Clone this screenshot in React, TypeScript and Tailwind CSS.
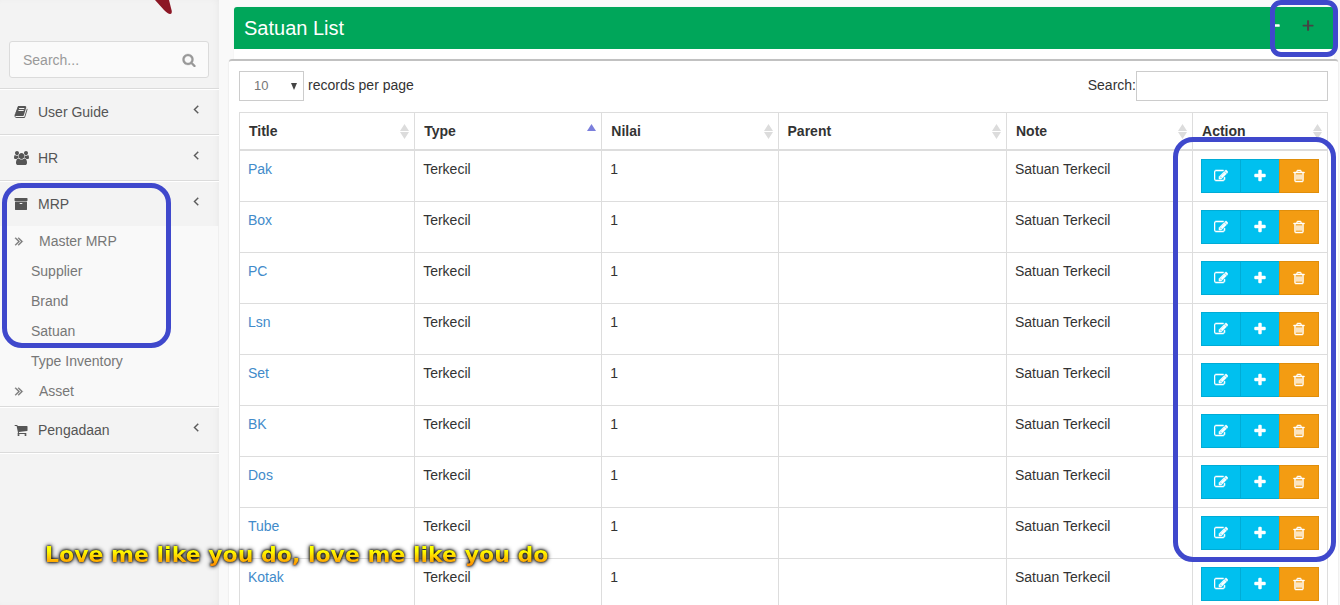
import React from "react";

const PATHS = {
  plus: "M1600 736v192q0 40-28 68t-68 28h-416v416q0 40-28 68t-68 28h-192q-40 0-68-28t-28-68v-416h-416q-40 0-68-28t-28-68v-192q0-40 28-68t68-28h416v-416q0-40 28-68t68-28h192q40 0 68 28t28 68v416h416q40 0 68 28t28 68z",
  thinPlus: "M1600 760v144q0 40-68 40h-496v496q0 60-50 60h-164q-50 0-50-60v-496h-496q-68 0-68-40v-144q0-40 68-40h496v-496q0-60 50-60h164q50 0 50 60v496h496q68 0 68 40z",
  minus: "M1600 736v192q0 40-28 68t-68 28h-1216q-40 0-68-28t-28-68v-192q0-40 28-68t68-28h1216q40 0 68 28t28 68z",
  search:
    "M1216 832q0-185-131.500-316.500t-316.500-131.500-316.500 131.500-131.500 316.500 131.500 316.500 316.500 131.500 316.500-131.500 131.500-316.500zm512 832q0 52-38 90t-90 38q-54 0-90-38l-343-342q-179 124-399 124-143 0-273.500-55.500t-225-150-150-225-55.500-273.500 55.500-273.500 150-225 225-150 273.500-55.500 273.500 55.500 225 150 150 225 55.500 273.500q0 220-124 399l343 343q37 37 37 90z",
  trash:
    "M704 736v576q0 14-9 23t-23 9h-64q-14 0-23-9t-9-23v-576q0-14 9-23t23-9h64q14 0 23 9t9 23zm256 0v576q0 14-9 23t-23 9h-64q-14 0-23-9t-9-23v-576q0-14 9-23t23-9h64q14 0 23 9t9 23zm256 0v576q0 14-9 23t-23 9h-64q-14 0-23-9t-9-23v-576q0-14 9-23t23-9h64q14 0 23 9t9 23zm128 724v-948h-896v948q0 22 7 40.500t14.500 27 10.500 8.500h832q3 0 10.500-8.500t14.500-27 7-40.500zm-672-1076h448l-48-117q-7-9-17-11h-317q-10 2-17 11zm928 32v64q0 14-9 23t-23 9h-96v948q0 83-47 143.500t-113 60.500h-832q-66 0-113-58.500t-47-141.500v-952h-96q-14 0-23-9t-9-23v-64q0-14 9-23t23-9h309l70-167q15-37 54-63t79-26h320q40 0 79 26t54 63l70 167h309q14 0 23 9t9 23z",
  edit: "M888 1184l116-116-152-152-116 116v56h96v96h56zm440-720q-16-16-33 1l-350 350q-17 17-1 33t33-1l350-350q17-17 1-33zm80 594v190q0 119-84.500 203.500t-203.500 84.500h-832q-119 0-203.500-84.500t-84.500-203.500v-832q0-119 84.500-203.500t203.500-84.500h832q63 0 117 25 15 7 18 23 3 17-9 29l-49 49q-14 14-32 8-23-6-45-6h-832q-66 0-113 47t-47 113v832q0 66 47 113t113 47h832q66 0 113-47t47-113v-126q0-13 9-22l64-64q15-15 35-7t20 29zm-96-738l288 288-672 672h-288v-288zm444 132l-92 92-288-288 92-92q28-28 68-28t68 28l152 152q28 28 28 68t-28 68z",
  archive:
    "M1088 832q0-26-19-45t-45-19h-256q-26 0-45 19t-19 45 19 45 45 19h256q26 0 45-19t19-45zm576-192v960q0 26-19 45t-45 19h-1408q-26 0-45-19t-19-45v-960q0-26 19-45t45-19h1408q26 0 45 19t19 45zm64-448v256q0 26-19 45t-45 19h-1536q-26 0-45-19t-19-45v-256q0-26 19-45t45-19h1536q26 0 45 19t19 45z",
  cart: "M704 1536q0 52-38 90t-90 38-90-38-38-90 38-90 90-38 90 38 38 90zm896 0q0 52-38 90t-90 38-90-38-38-90 38-90 90-38 90 38 38 90zm128-1088v512q0 24-16.500 42.500t-40.500 21.500l-1044 122q13 60 13 70 0 16-24 64h920q26 0 45 19t19 45-19 45-45 19h-1024q-26 0-45-19t-19-45q0-11 8-31.500t16-36 21.500-40 15.500-29.500l-177-823h-204q-26 0-45-19t-19-45 19-45 45-19h256q16 0 28.500 6.500t19.500 15.500 13 24.500 8 26 5.500 29.500 4.500 26h1201q26 0 45 19t19 45z",
  book: "M1703 478q40 57 18 129l-275 906q-19 64-76.500 107.500t-122.500 43.500h-923q-77 0-148.500-53.500t-99.500-131.500q-24-67-2-127 0-4 3-27t4-37q1-8-3-21.500t-3-19.500q2-11 8-21t16.500-23.500 16.500-23.500q23-38 45-91.500t30-91.500q3-10 .5-30t-.5-28q3-11 17-28t17-23q21-36 42-92t25-90q1-9-2.500-32t.5-28q4-13 22-30.500t22-22.500q19-26 42.500-84.500t27.500-96.500q1-8-3-25.500t-2-26.500q2-8 9-18t18-23 17-21q8-12 16.500-30.500t15-35 16-36 19.500-32 26.500-23.500 36-11.500 47.500 5.500l-1 3q38-9 51-9h761q74 0 114 56t18 130l-274 906q-36 119-71.500 153.500t-128.500 34.500h-869q-27 0-38 15-11 16-1 43 24 70 144 70h923q29 0 56-15.500t35-41.500l300-987q7-22 5-57 38 15 59 43zm-1064 2q-4 13 2 22.500t20 9.500h608q13 0 25.500-9.500t16.500-22.500l21-64q4-13-2-22.500t-20-9.500h-608q-13 0-25.500 9.500t-16.500 22.500zm-83 256q-4 13 2 22.500t20 9.500h608q13 0 25.500-9.500t16.500-22.500l21-64q4-13-2-22.500t-20-9.500h-608q-13 0-25.500 9.500t-16.500 22.500z",
  users:
    "M593 896q-162 5-265 128h-134q-82 0-138-40.500t-56-118.500q0-353 124-353 6 0 43.500 21t97.500 42.500 119 21.500q67 0 133-23-5 37-5 66 0 139 81 256zm1071 637q0 120-73 189.500t-194 69.500h-874q-121 0-194-69.500t-73-189.500q0-53 3.500-103.500t14-109 26.500-108.500 43-97.500 62-81 85.500-53.500 111.500-20q10 0 43 21.500t73 48 107 48 135 21.500 135-21.500 107-48 73-48 43-21.500q61 0 111.500 20t85.500 53.500 62 81 43 97.500 26.500 108.500 14 109 3.500 103.500zm-1024-1277q0 106-75 181t-181 75-181-75-75-181 75-181 181-75 181 75 75 181zm704 384q0 159-112.500 271.500t-271.500 112.500-271.500-112.500-112.500-271.500 112.500-271.500 271.500-112.500 271.500 112.500 112.500 271.500zm576 225q0 78-56 118.500t-138 40.500h-134q-103-123-265-128 81-117 81-256 0-29-5-66 66 23 133 23 59 0 119-21.500t97.500-42.500 43.500-21q124 0 124 353zm-128-609q0 106-75 181t-181 75-181-75-75-181 75-181 181-75 181 75 75 181z",
  angleLeft:
    "M1203 544q0 13-10 23l-393 393 393 393q10 10 10 23t-10 23l-50 50q-10 10-23 10t-23-10l-466-466q-10-10-10-23t10-23l466-466q10-10 23-10t23 10l50 50q10 10 10 23z",
  doubleRight:
    "M979 960q0 13-10 23l-466 466q-10 10-23 10t-23-10l-50-50q-10-10-10-23t10-23l393-393-393-393q-10-10-10-23t10-23l50-50q10-10 23-10t23 10l466 466q10 10 10 23zm384 0q0 13-10 23l-466 466q-10 10-23 10t-23-10l-50-50q-10-10-10-23t10-23l393-393-393-393q-10-10-10-23t10-23l50-50q10-10 23-10t23 10l466 466q10 10 10 23z",
};

type IconName = keyof typeof PATHS;

function Icon({ name, className }: { name: IconName; className: string }) {
  return (
    <svg viewBox={name === "users" ? "0 0 1920 1792" : "0 0 1792 1792"} className={className} fill="currentColor" stroke="currentColor" aria-hidden="true">
      <path d={PATHS[name]} />
    </svg>
  );
}

function MenuLink({ icon, label }: { icon: IconName; label: string }) {
  return (
    <a href="#" className="flex h-[46px] items-center border-t border-[#dbdbdb] pl-3.5 pr-4 text-[#555] shadow-[inset_0_1px_0_#fff]">
      <span className="flex w-6 items-center">
        <Icon name={icon} className={icon === "users" ? "h-3.5 w-[15px]" : "size-3.5"} />
      </span>
      <span className="flex-1">{label}</span>
      <Icon name="angleLeft" className="mb-1.5 size-3.5 stroke-[50]" />
    </a>
  );
}

function SubLink({ label, parent }: { label: string; parent?: boolean }) {
  return (
    <li>
      <a href="#" className={parent ? "flex h-[30px] items-center pl-3 text-[#777]" : "flex h-[30px] items-center pl-[31px] text-[#777]"}>
        {parent && <Icon name="doubleRight" className="mr-[13px] size-3.5 stroke-[50]" />}
        {label}
      </a>
    </li>
  );
}

function Sidebar() {
  return (
    <aside className="w-[219px] shrink-0 bg-[#f3f3f3] shadow-[inset_-3px_0_8px_-4px_rgba(0,0,0,0.07)]">
      <div className="flex h-[41px] items-start justify-center pl-[109px]">
        <svg viewBox="0 0 24 15" className="h-[15px] w-6" aria-hidden="true">
          <path d="M3 0H17L19 8Q21 14 18 14Q16 14 12 10Z" fill="#8c1725" />
        </svg>
      </div>
      <form className="mb-2.5 ml-[9px] mr-2.5 flex h-[37px] rounded-[3px] border border-[#dbdbdb] bg-[#fafafa]">
        <input type="text" aria-label="Search menu" placeholder="Search..." className="min-w-0 flex-1 pl-[13px] text-[#666] outline-none placeholder:text-[#999]" />
        <button type="button" aria-label="Search" className="px-3 text-[#999]">
          <Icon name="search" className="size-3.5 stroke-[40]" />
        </button>
      </form>
      <nav aria-label="Main menu">
        <ul>
          <li><MenuLink icon="book" label="User Guide" /></li>
          <li><MenuLink icon="users" label="HR" /></li>
          <li>
            <MenuLink icon="archive" label="MRP" />
            <ul className="border-r border-[#efefef] bg-[#f9f9f9]">
              <SubLink label="Master MRP" parent />
              <SubLink label="Supplier" />
              <SubLink label="Brand" />
              <SubLink label="Satuan" />
              <SubLink label="Type Inventory" />
              <SubLink label="Asset" parent />
            </ul>
          </li>
          <li className="border-b border-[#dbdbdb]"><MenuLink icon="cart" label="Pengadaan" /></li>
        </ul>
        <div className="h-px bg-white" />
      </nav>
    </aside>
  );
}

const COLUMNS = [
  { name: "Title", width: "w-[16.1%]" },
  { name: "Type", width: "w-[17.2%]" },
  { name: "Nilai", width: "w-[16.2%]" },
  { name: "Parent", width: "w-[21%]" },
  { name: "Note", width: "w-[17.1%]" },
  { name: "Action", width: "w-[12.4%]" },
];

const TITLES = ["Pak", "Box", "PC", "Lsn", "Set", "BK", "Dos", "Tube", "Kotak"];

function SortMark({ ascending }: { ascending: boolean }) {
  return (
    <svg viewBox="0 0 9 15" className="h-[15px] w-[9px]" aria-hidden="true">
      {ascending ? (
        <path d="M0 7L4.500 0L9 7Z" fill="#7b7fdc" />
      ) : (
        <path d="M0 7L4.500 0L9 7ZM0 8H9L4.500 15Z" fill="#dcdcdc" />
      )}
    </svg>
  );
}

function RowActions() {
  return (
    <div className="flex text-white">
      <button type="button" aria-label="Edit" className="flex h-[34px] w-10 items-center justify-center border border-[#00acd6] bg-[#00c0ef]">
        <Icon name="edit" className="size-3.5 stroke-[70]" />
      </button>
      <button type="button" aria-label="Add" className="-ml-px flex h-[34px] w-10 items-center justify-center border border-[#00acd6] bg-[#00c0ef]">
        <Icon name="plus" className="size-3.5 stroke-[60]" />
      </button>
      <button type="button" aria-label="Delete" className="-ml-px flex h-[34px] w-10 items-center justify-center border border-[#e08e0b] bg-[#f39c12]">
        <Icon name="trash" className="size-3.5 stroke-[60]" />
      </button>
    </div>
  );
}

function UnitTable() {
  return (
    <table className="w-full table-fixed border-separate border-spacing-0 border-l border-t border-[#ddd]">
      <thead>
        <tr>
          {COLUMNS.map((column) => (
            <th key={column.name} className={`${column.width} h-[38px] border-b-2 border-r border-[#ddd] pl-[9px] pr-[5px] text-left font-bold`}>
              <div className="flex items-center justify-between">
                {column.name}
                <SortMark ascending={column.name === "Type"} />
              </div>
            </th>
          ))}
        </tr>
      </thead>
      <tbody>
        {TITLES.map((title) => (
          <tr key={title} className="align-top">
            <td className="border-b border-r border-[#ddd] p-2"><a href="#" className="text-[#428bca]">{title}</a></td>
            <td className="border-b border-r border-[#ddd] p-2">Terkecil</td>
            <td className="border-b border-r border-[#ddd] p-2">1</td>
            <td className="border-b border-r border-[#ddd] p-2" />
            <td className="border-b border-r border-[#ddd] p-2">Satuan Terkecil</td>
            <td className="border-b border-r border-[#ddd] p-2"><RowActions /></td>
          </tr>
        ))}
      </tbody>
    </table>
  );
}

export default function App() {
  return (
    <div className="relative flex h-screen overflow-hidden bg-[#f9f9f9] font-['Liberation_Sans',Arial,sans-serif] text-sm text-[#333]">
      <Sidebar />
      <main className="min-w-0 flex-1 pl-2.5 pr-0.5 pt-[7px]">
        <div className="ml-[5px] mr-1 rounded-t-[3px] bg-white pb-2.5 shadow-[0_0_1px_rgba(0,0,0,0.15)]">
          <header className="flex h-[42px] items-center justify-between rounded-t-[3px] bg-[#00a65a] px-2.5">
            <h1 className="text-xl text-white">Satuan List</h1>
            <div className="mb-1 flex items-center">
              <button type="button" aria-label="Collapse" className="flex w-[33px] justify-center text-white">
                <Icon name="minus" className="size-3" />
              </button>
              <button type="button" aria-label="Add unit" className="flex w-[33px] justify-center text-[#444]">
                <Icon name="thinPlus" className="size-3.5" />
              </button>
            </div>
          </header>
        </div>
        <section className="rounded-[3px] border-t-2 border-[#c1c1c1] bg-white px-2.5 pt-2.5 shadow-[0_1px_1px_1px_rgba(0,0,0,0.04)]">
          <div className="mb-[11px] flex items-center justify-between">
            <label className="flex items-center gap-1">
              <span className="relative flex items-center">
                <select defaultValue="10" className="h-[30px] w-[65px] appearance-none border border-[#ccc] bg-white pl-3.5 text-[13px] text-[#777]">
                  <option>10</option>
                  <option>25</option>
                  <option>50</option>
                </select>
                <svg viewBox="0 0 6 7" className="pointer-events-none absolute right-[7px] h-[7px] w-1.5" aria-hidden="true">
                  <path d="M0 0H6L3 7Z" fill="#444" />
                </svg>
              </span>
              <span className="pb-0.5">records per page</span>
            </label>
            <label className="flex items-center">
              <span className="pb-0.5">Search:</span>
              <input type="text" className="h-[30px] w-48 border border-[#ccc] bg-white px-2 outline-none" />
            </label>
          </div>
          <UnitTable />
        </section>
      </main>

      <div className="pointer-events-none absolute left-0.5 top-[183px] h-[165px] w-[169px] rounded-[20px] border-[5px] border-[#3f48cc]" />
      <div className="pointer-events-none absolute right-0.5 top-0 h-[57px] w-[68px] rounded-[11px] border-[5px] border-[#3f48cc]" />
      <div className="pointer-events-none absolute right-1 top-[137px] h-[425px] w-[163px] rounded-[20px] border-[5px] border-[#3f48cc]" />
      <div className="pointer-events-none absolute left-[45px] top-[541px] drop-shadow-[0_0_2px_#000]">
        <p className="whitespace-nowrap bg-linear-to-b from-[#ffff00] from-35% to-[#ff9000] to-85% bg-clip-text font-['DejaVu_Sans',Verdana,sans-serif] text-[22px] leading-7 font-bold text-transparent drop-shadow-[0_0_1px_#000]">
          Love me like you do, love me like you do
        </p>
      </div>
    </div>
  );
}
